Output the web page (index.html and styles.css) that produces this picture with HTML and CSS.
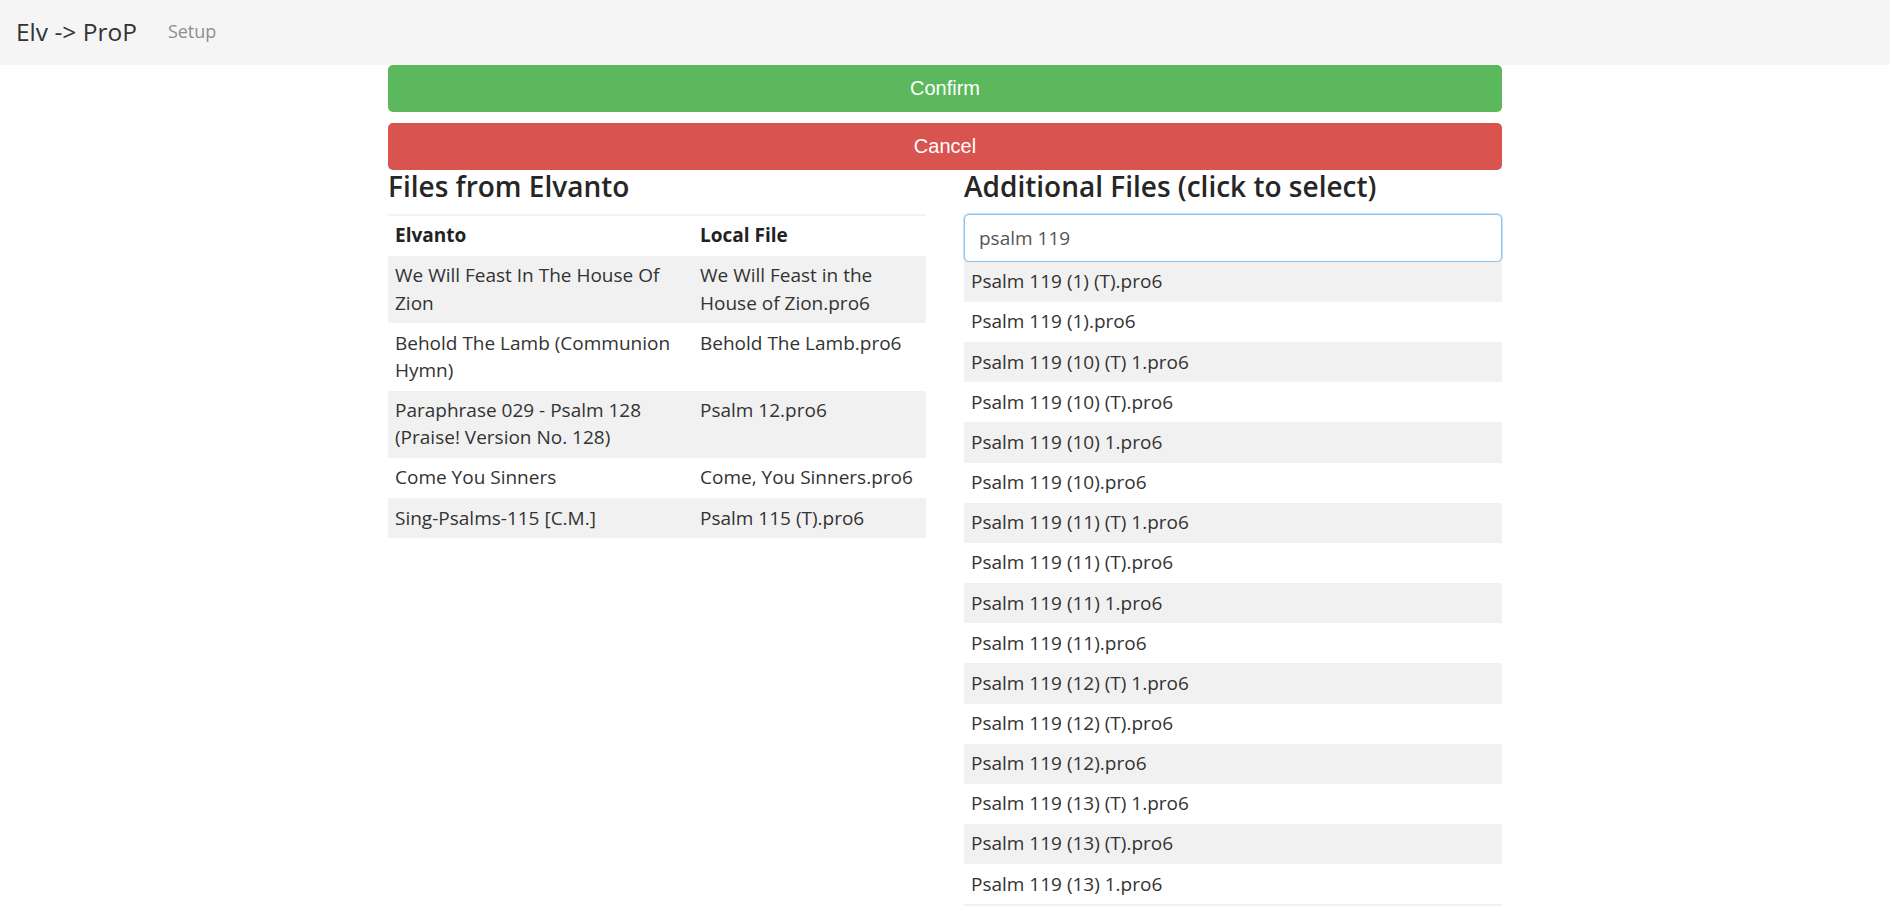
FILE: index.html
```html
<!DOCTYPE html>
<html>
<head>
    <meta charset="utf-8">
    <title>Elv -&gt; ProP</title>
    <link rel="stylesheet" href="styles.css">
</head>
<body>
    <nav class="navbar">
        <a class="navbar-brand" href="#">Elv -&gt; ProP</a>
        <a class="nav-link" href="#">Setup</a>
    </nav>

    <div class="container">
        <button class="btn btn-confirm">Confirm</button>
        <button class="btn btn-cancel">Cancel</button>

        <div class="columns">
            <div class="col">
                <h3>Files from Elvanto</h3>
                <table class="files-table">
                    <colgroup>
                        <col class="col-elvanto">
                        <col>
                    </colgroup>
                    <thead>
                        <tr>
                            <th>Elvanto</th>
                            <th>Local File</th>
                        </tr>
                    </thead>
                    <tbody>
                        <tr>
                            <td>We Will Feast In The House Of Zion</td>
                            <td>We Will Feast in the House of Zion.pro6</td>
                        </tr>
                        <tr>
                            <td>Behold The Lamb (Communion Hymn)</td>
                            <td>Behold The Lamb.pro6</td>
                        </tr>
                        <tr>
                            <td>Paraphrase 029 - Psalm 128 (Praise! Version No. 128)</td>
                            <td>Psalm 12.pro6</td>
                        </tr>
                        <tr>
                            <td>Come You Sinners</td>
                            <td>Come, You Sinners.pro6</td>
                        </tr>
                        <tr>
                            <td>Sing-Psalms-115 [C.M.]</td>
                            <td>Psalm 115 (T).pro6</td>
                        </tr>
                    </tbody>
                </table>
            </div>

            <div class="col">
                <h3>Additional Files (click to select)</h3>
                <input class="search" type="text" value="psalm 119" autofocus>
                <ul class="file-list">
                    <li>Psalm 119 (1) (T).pro6</li>
                    <li>Psalm 119 (1).pro6</li>
                    <li>Psalm 119 (10) (T) 1.pro6</li>
                    <li>Psalm 119 (10) (T).pro6</li>
                    <li>Psalm 119 (10) 1.pro6</li>
                    <li>Psalm 119 (10).pro6</li>
                    <li>Psalm 119 (11) (T) 1.pro6</li>
                    <li>Psalm 119 (11) (T).pro6</li>
                    <li>Psalm 119 (11) 1.pro6</li>
                    <li>Psalm 119 (11).pro6</li>
                    <li>Psalm 119 (12) (T) 1.pro6</li>
                    <li>Psalm 119 (12) (T).pro6</li>
                    <li>Psalm 119 (12).pro6</li>
                    <li>Psalm 119 (13) (T) 1.pro6</li>
                    <li>Psalm 119 (13) (T).pro6</li>
                    <li>Psalm 119 (13) 1.pro6</li>
                    <li>Psalm 119 (13).pro6</li>
                    <li>Psalm 119 (14) (T) 1.pro6</li>
                    <li>Psalm 119 (14) (T).pro6</li>
                </ul>
            </div>
        </div>
    </div>
</body>
</html>
```

FILE: styles.css
```css
html {
    overflow: hidden;
}
body {
    margin: 0;
    font-family: "Open Sans", "Noto Sans", sans-serif;
    font-size: 19px;
    line-height: 1.43;
    color: #333;
    background: #fff;
}
a {
    text-decoration: none;
}
.navbar {
    height: 65px;
    background: #f5f5f5;
    display: flex;
    align-items: center;
    padding: 0 16px;
}
.navbar-brand {
    font-size: 24.5px;
    color: #333;
    line-height: 1;
}
.nav-link {
    font-size: 18px;
    color: #8e8e8e;
    margin-left: 31px;
    padding-bottom: 4px;
    line-height: 1;
}
.container {
    width: 1114px;
    margin: 0 auto;
}
.btn {
    display: block;
    width: 100%;
    height: 47px;
    border: none;
    border-radius: 5px;
    color: #fff;
    font-family: "Liberation Sans", Arial, sans-serif;
    font-size: 20px;
    cursor: pointer;
}
.btn-confirm {
    background: #5cb85c;
}
.btn-cancel {
    background: #d9534f;
    margin-top: 11px;
}
.columns {
    display: grid;
    grid-template-columns: 1fr 1fr;
    column-gap: 38px;
}
h3 {
    font-size: 28px;
    font-weight: 600;
    line-height: 1.1;
    margin: 1px 0 12px;
    color: #262626;
}
.files-table {
    width: 100%;
    border-collapse: collapse;
    table-layout: fixed;
    border-top: 2px solid #f3f3f3;
}
.col-elvanto {
    width: 305px;
}
.files-table th,
.files-table td {
    text-align: left;
    vertical-align: top;
    padding: 6.5px 7px;
}
.files-table th {
    font-weight: 700;
    color: #222;
}
.files-table tbody tr:nth-child(odd) {
    background: #f1f1f1;
}
.search {
    display: block;
    width: 100%;
    box-sizing: border-box;
    height: 48px;
    padding: 0 14px;
    font-family: inherit;
    font-size: 19px;
    color: #555;
    border: 1px solid #86c1ef;
    border-radius: 5px;
    box-shadow: 0 0 0 1px rgba(102, 175, 233, 0.35);
    outline: none;
}
.file-list {
    list-style: none;
    margin: 0;
    padding: 0;
}
.file-list li {
    padding: 6.5px 7px;
    cursor: pointer;
}
.file-list li:nth-child(odd) {
    background: #f1f1f1;
}
```
